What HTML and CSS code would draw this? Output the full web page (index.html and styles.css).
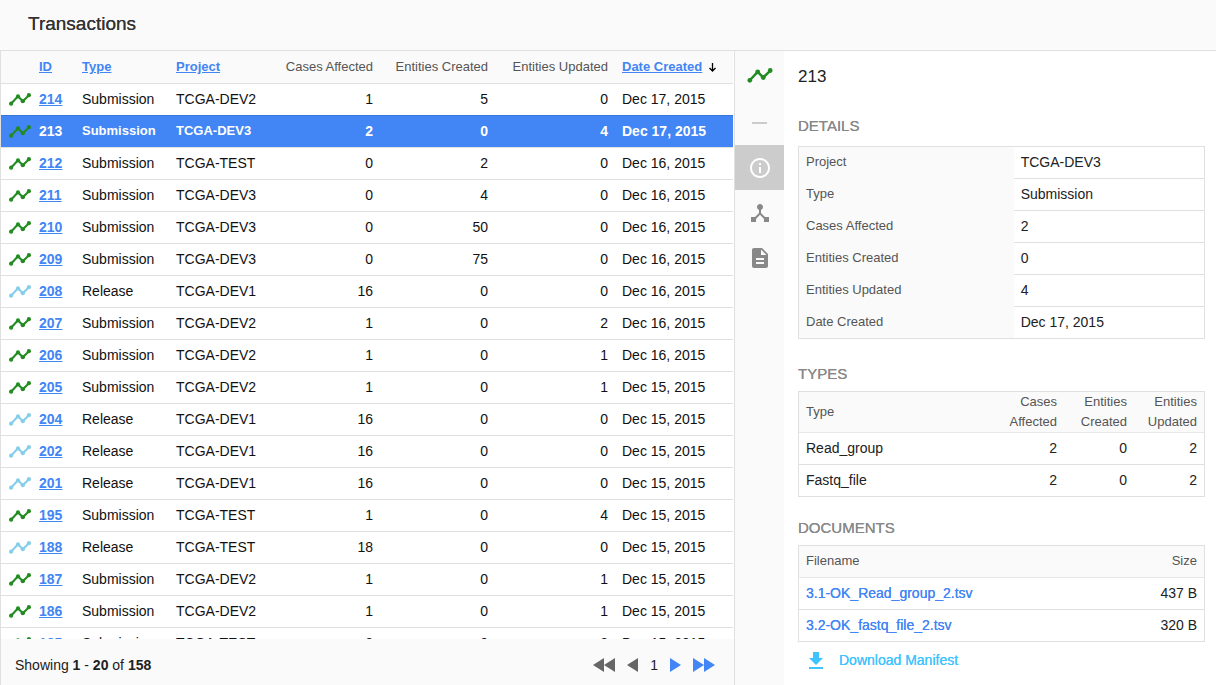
FILE: index.html
```html
<!DOCTYPE html>
<html lang="en">
<head>
<meta charset="utf-8">
<title>Transactions</title>
<link rel="stylesheet" href="styles.css">
</head>
<body>
<svg class="sprite" aria-hidden="true">
  <symbol id="trend" viewBox="0 0 22 13">
    <path d="M2 10.800 9 3.300 13.800 8.200 20 2.200" fill="none" stroke="currentColor" stroke-width="2.100"/>
    <circle cx="2.100" cy="10.700" r="2.100" fill="currentColor"/>
    <circle cx="9" cy="3.400" r="2.100" fill="currentColor"/>
    <circle cx="13.800" cy="8.200" r="2.100" fill="currentColor"/>
    <circle cx="19.900" cy="2.200" r="2.100" fill="currentColor"/>
  </symbol>
</svg>
<header class="topbar"><h1>Transactions</h1></header>
<main class="layout">
  <section class="list">
    <div class="scroll">
      <table class="grid transactions">
        <colgroup><col class="c-icon"><col class="c-id"><col class="c-type"><col><col class="c-cases"><col class="c-created"><col class="c-updated"><col class="c-date"></colgroup>
        <thead>
          <tr><th></th><th><a href="#">ID</a></th><th><a href="#">Type</a></th><th><a href="#">Project</a></th><th class="num">Cases Affected</th><th class="num">Entities Created</th><th class="num">Entities Updated</th><th><span class="sorted"><a href="#">Date Created</a><svg class="arrow" viewBox="0 0 7 9"><path d="M3.500 0V8M.5 5 3.500 8 6.500 5" fill="none" stroke="currentColor" stroke-width="1.300"/></svg></span></th></tr>
        </thead>
        <tbody>
          <tr><td><svg class="trend"><use href="#trend"/></svg></td><td><a href="#">214</a></td><td>Submission</td><td>TCGA-DEV2</td><td class="num">1</td><td class="num">5</td><td class="num">0</td><td>Dec 17, 2015</td></tr>
          <tr class="selected"><td><svg class="trend"><use href="#trend"/></svg></td><td><a href="#">213</a></td><td class="compact">Submission</td><td class="compact">TCGA-DEV3</td><td class="num">2</td><td class="num">0</td><td class="num">4</td><td>Dec 17, 2015</td></tr>
          <tr><td><svg class="trend"><use href="#trend"/></svg></td><td><a href="#">212</a></td><td>Submission</td><td>TCGA-TEST</td><td class="num">0</td><td class="num">2</td><td class="num">0</td><td>Dec 16, 2015</td></tr>
          <tr><td><svg class="trend"><use href="#trend"/></svg></td><td><a href="#">211</a></td><td>Submission</td><td>TCGA-DEV3</td><td class="num">0</td><td class="num">4</td><td class="num">0</td><td>Dec 16, 2015</td></tr>
          <tr><td><svg class="trend"><use href="#trend"/></svg></td><td><a href="#">210</a></td><td>Submission</td><td>TCGA-DEV3</td><td class="num">0</td><td class="num">50</td><td class="num">0</td><td>Dec 16, 2015</td></tr>
          <tr><td><svg class="trend"><use href="#trend"/></svg></td><td><a href="#">209</a></td><td>Submission</td><td>TCGA-DEV3</td><td class="num">0</td><td class="num">75</td><td class="num">0</td><td>Dec 16, 2015</td></tr>
          <tr class="release"><td><svg class="trend"><use href="#trend"/></svg></td><td><a href="#">208</a></td><td>Release</td><td>TCGA-DEV1</td><td class="num">16</td><td class="num">0</td><td class="num">0</td><td>Dec 16, 2015</td></tr>
          <tr><td><svg class="trend"><use href="#trend"/></svg></td><td><a href="#">207</a></td><td>Submission</td><td>TCGA-DEV2</td><td class="num">1</td><td class="num">0</td><td class="num">2</td><td>Dec 16, 2015</td></tr>
          <tr><td><svg class="trend"><use href="#trend"/></svg></td><td><a href="#">206</a></td><td>Submission</td><td>TCGA-DEV2</td><td class="num">1</td><td class="num">0</td><td class="num">1</td><td>Dec 16, 2015</td></tr>
          <tr><td><svg class="trend"><use href="#trend"/></svg></td><td><a href="#">205</a></td><td>Submission</td><td>TCGA-DEV2</td><td class="num">1</td><td class="num">0</td><td class="num">1</td><td>Dec 15, 2015</td></tr>
          <tr class="release"><td><svg class="trend"><use href="#trend"/></svg></td><td><a href="#">204</a></td><td>Release</td><td>TCGA-DEV1</td><td class="num">16</td><td class="num">0</td><td class="num">0</td><td>Dec 15, 2015</td></tr>
          <tr class="release"><td><svg class="trend"><use href="#trend"/></svg></td><td><a href="#">202</a></td><td>Release</td><td>TCGA-DEV1</td><td class="num">16</td><td class="num">0</td><td class="num">0</td><td>Dec 15, 2015</td></tr>
          <tr class="release"><td><svg class="trend"><use href="#trend"/></svg></td><td><a href="#">201</a></td><td>Release</td><td>TCGA-DEV1</td><td class="num">16</td><td class="num">0</td><td class="num">0</td><td>Dec 15, 2015</td></tr>
          <tr><td><svg class="trend"><use href="#trend"/></svg></td><td><a href="#">195</a></td><td>Submission</td><td>TCGA-TEST</td><td class="num">1</td><td class="num">0</td><td class="num">4</td><td>Dec 15, 2015</td></tr>
          <tr class="release"><td><svg class="trend"><use href="#trend"/></svg></td><td><a href="#">188</a></td><td>Release</td><td>TCGA-TEST</td><td class="num">18</td><td class="num">0</td><td class="num">0</td><td>Dec 15, 2015</td></tr>
          <tr><td><svg class="trend"><use href="#trend"/></svg></td><td><a href="#">187</a></td><td>Submission</td><td>TCGA-DEV2</td><td class="num">1</td><td class="num">0</td><td class="num">1</td><td>Dec 15, 2015</td></tr>
          <tr><td><svg class="trend"><use href="#trend"/></svg></td><td><a href="#">186</a></td><td>Submission</td><td>TCGA-DEV2</td><td class="num">1</td><td class="num">0</td><td class="num">1</td><td>Dec 15, 2015</td></tr>
          <tr><td><svg class="trend"><use href="#trend"/></svg></td><td><a href="#">185</a></td><td>Submission</td><td>TCGA-TEST</td><td class="num">2</td><td class="num">0</td><td class="num">2</td><td>Dec 15, 2015</td></tr>
        </tbody>
      </table>
    </div>
    <footer class="pager">
      <p>Showing <b>1</b> - <b>20</b> of <b>158</b></p>
      <nav class="pages" aria-label="Pages">
        <button type="button" disabled aria-label="First page"><svg width="22" height="14" viewBox="0 0 22 14"><path d="M0 7 11 0V14ZM11 7 22 0V14Z" fill="currentColor"/></svg></button>
        <button type="button" disabled aria-label="Previous page"><svg width="11" height="14" viewBox="0 0 11 14"><path d="M0 7 11 0V14Z" fill="currentColor"/></svg></button>
        <span>1</span>
        <button type="button" aria-label="Next page"><svg width="11" height="14" viewBox="0 0 11 14"><path d="M11 7 0 0V14Z" fill="currentColor"/></svg></button>
        <button type="button" aria-label="Last page"><svg width="22" height="14" viewBox="0 0 22 14"><path d="M11 7 0 0V14ZM22 7 11 0V14Z" fill="currentColor"/></svg></button>
      </nav>
    </footer>
  </section>
  <nav class="rail" aria-label="Sections">
    <svg class="rail-trend" viewBox="0 0 22 13"><use href="#trend"/></svg>
    <span class="dash"></span>
    <button type="button" class="active" aria-label="Details"><svg width="24" height="24" viewBox="0 0 24 24"><path fill="currentColor" d="M11 17h2v-6h-2v6zm1-15C6.480 2 2 6.480 2 12s4.480 10 10 10 10-4.480 10-10S17.520 2 12 2zm0 18c-4.410 0-8-3.590-8-8s3.590-8 8-8 8 3.590 8 8-3.590 8-8 8zM11 9h2V7h-2v2z"/></svg></button>
    <button type="button" aria-label="Types"><svg width="24" height="24" viewBox="0 0 24 24"><path fill="currentColor" d="M17 16l-4-4V8.820C14.160 8.400 15 7.300 15 6c0-1.660-1.340-3-3-3S9 4.340 9 6c0 1.300.84 2.400 2 2.820V12l-4 4H3v5h5v-3.050l4-4.200 4 4.200V21h5v-5h-4z"/></svg></button>
    <button type="button" aria-label="Documents"><svg width="24" height="24" viewBox="0 0 24 24"><path fill="currentColor" d="M14 2H6c-1.100 0-1.990.9-1.990 2L4 20c0 1.100.89 2 1.990 2H18c1.100 0 2-.9 2-2V8l-6-6zm2 16H8v-2h8v2zm0-4H8v-2h8v2zm-3-5V3.500L18.500 9H13z"/></svg></button>
  </nav>
  <aside class="detail">
    <h2>213</h2>
    <section class="section-facts">
      <h3>DETAILS</h3>
      <table class="grid boxed facts">
        <tbody>
          <tr><th scope="row">Project</th><td>TCGA-DEV3</td></tr>
          <tr><th scope="row">Type</th><td>Submission</td></tr>
          <tr><th scope="row">Cases Affected</th><td>2</td></tr>
          <tr><th scope="row">Entities Created</th><td>0</td></tr>
          <tr><th scope="row">Entities Updated</th><td>4</td></tr>
          <tr><th scope="row">Date Created</th><td>Dec 17, 2015</td></tr>
        </tbody>
      </table>
    </section>
    <section>
      <h3>TYPES</h3>
      <table class="grid boxed types">
        <colgroup><col><col class="c-count"><col class="c-count"><col class="c-count"></colgroup>
        <thead><tr><th>Type</th><th class="num">Cases Affected</th><th class="num">Entities Created</th><th class="num">Entities Updated</th></tr></thead>
        <tbody>
          <tr><td>Read_group</td><td class="num">2</td><td class="num">0</td><td class="num">2</td></tr>
          <tr><td>Fastq_file</td><td class="num">2</td><td class="num">0</td><td class="num">2</td></tr>
        </tbody>
      </table>
    </section>
    <section>
      <h3>DOCUMENTS</h3>
      <table class="grid boxed documents">
        <thead><tr><th>Filename</th><th class="num">Size</th></tr></thead>
        <tbody>
          <tr><td><a href="#">3.1-OK_Read_group_2.tsv</a></td><td class="num">437 B</td></tr>
          <tr><td><a href="#">3.2-OK_fastq_file_2.tsv</a></td><td class="num">320 B</td></tr>
        </tbody>
      </table>
      <a class="download" href="#"><svg width="14" height="17" viewBox="0 0 14 17"><path fill="currentColor" d="M4 0h6v6h4L7 13 0 6h4zM0 15h14v2H0z"/></svg>Download Manifest</a>
    </section>
  </aside>
</main>
</body>
</html>
```
FILE: styles.css
```css
* { box-sizing: border-box; }

body {
  margin: 0;
  height: 100vh;
  display: flex;
  flex-direction: column;
  overflow: hidden;
  background: #fff;
  color: #212121;
  font: 14px/20px "Liberation Sans", Arial, sans-serif;
}

h1, h2, h3, p { margin: 0; }
a { color: #4285f4; }
svg { display: block; }
.sprite { position: absolute; width: 0; height: 0; }

button {
  display: flex;
  align-items: center;
  justify-content: center;
  padding: 0;
  border: 0;
  background: none;
  color: #4285f4;
  cursor: pointer;
}

.topbar {
  flex: none;
  padding: 12px 28px 14px;
  border-bottom: 1px solid #e0e0e0;
  background: #fafafa;
}
.topbar h1 {
  color: #333;
  font-size: 19px;
  font-weight: 400;
  line-height: 24px;
  text-shadow: 0 0 0 currentColor;
}

.layout {
  flex: 1;
  min-height: 0;
  display: grid;
  grid-template-columns: minmax(0, 1fr) 50px 432px;
}

/* Tables */
.grid {
  width: 100%;
  border-collapse: separate;
  border-spacing: 0;
  table-layout: fixed;
}
.grid th, .grid td {
  padding: 5px 7px 6px;
  border-top: 1px solid #e0e0e0;
  text-align: left;
  font-weight: 400;
}
.grid th {
  background: #fafafa;
  color: #555;
  font-size: 13px;
}
.grid .num { text-align: right; }

.boxed { border: 1px solid #e0e0e0; }
.boxed thead + tbody tr:first-child > td { border-top-color: #e8e8e8; }
.boxed > :first-child tr:first-child > *, .boxed colgroup + thead th { border-top: 0; }

/* Transaction list */
.list {
  display: flex;
  flex-direction: column;
  min-height: 0;
  border-left: 1px solid #e0e0e0;
}
.scroll {
  flex: 1;
  min-height: 0;
  overflow: hidden;
  padding-right: 1px;
}
.transactions { white-space: nowrap; }
.transactions td { color: #111; }
.transactions thead th { border-top: 0; padding: 6px 7px; }
.transactions thead a { font-weight: 700; }
.transactions td:nth-child(2) a { font-weight: 700; }
.transactions td:first-child { padding-right: 0; }
.c-icon { width: 31px; }
.c-id { width: 43px; }
.c-type { width: 94px; }
.c-cases { width: 103px; }
.c-created { width: 115px; }
.c-updated { width: 120px; }
.c-date { width: 118px; }

.sorted {
  display: flex;
  align-items: center;
  gap: 7px;
  color: #000;
}
.arrow { width: 7px; height: 9px; }
.trend {
  width: 22px;
  height: 13px;
  margin-left: 1px;
  color: #228b22;
}
.release .trend { color: #87ceeb; }

.transactions .selected td {
  border-top-color: #3a75d8;
  background: #4285f4;
  color: #fff;
  font-weight: 700;
}
.selected .compact { font-size: 13px; }
.selected a { color: #fff; text-decoration: none; }

.pager {
  flex: none;
  display: flex;
  align-items: center;
  justify-content: space-between;
  padding: 16px 19px 10px 14px;
  padding-bottom: 10px;
  min-height: 46px;
  background: #fafafa;
}
.pages { display: flex; align-items: center; gap: 12px; }
.pages button:disabled { color: #666; }

/* Section rail */
.rail {
  display: flex;
  flex-direction: column;
  align-items: stretch;
  border-left: 1px solid #e0e0e0;
  background: #fafafa;
}
.rail-trend {
  width: 26px;
  height: 15px;
  margin: 17px auto 39px;
  color: #228b22;
}
.dash {
  width: 15px;
  height: 2px;
  margin: 0 auto 21px;
  background: #ccc;
}
.rail button { height: 45px; color: #888; }
.rail .active { background: #ccc; color: #fff; }

/* Detail panel */
.detail {
  display: flex;
  flex-direction: column;
  gap: 20px;
  min-width: 0;
  padding: 16px 11px 0 14px;
}
.detail h2 { font-size: 17px; font-weight: 400; }
.detail h3 {
  padding-bottom: 6px;
  color: #888;
  font-size: 15px;
  font-weight: 400;
  line-height: 22px;
  text-shadow: 0 0 0 currentColor;
}
.detail .section-facts { margin: 8px 0 4px; }
.detail .section-facts h3 { padding-bottom: 9px; }
.facts th { width: 53%; border-top-color: #fafafa; }
.c-count { width: 70px; }
.types thead th { padding: 0 7px; }
.documents a {
  text-decoration: none;
  text-shadow: 0 0 0 currentColor;
}
.download {
  display: flex;
  align-items: center;
  gap: 16px;
  padding: 8px 11px;
  color: #40c4ff;
  text-decoration: none;
  text-shadow: 0 0 0 currentColor;
}
```
